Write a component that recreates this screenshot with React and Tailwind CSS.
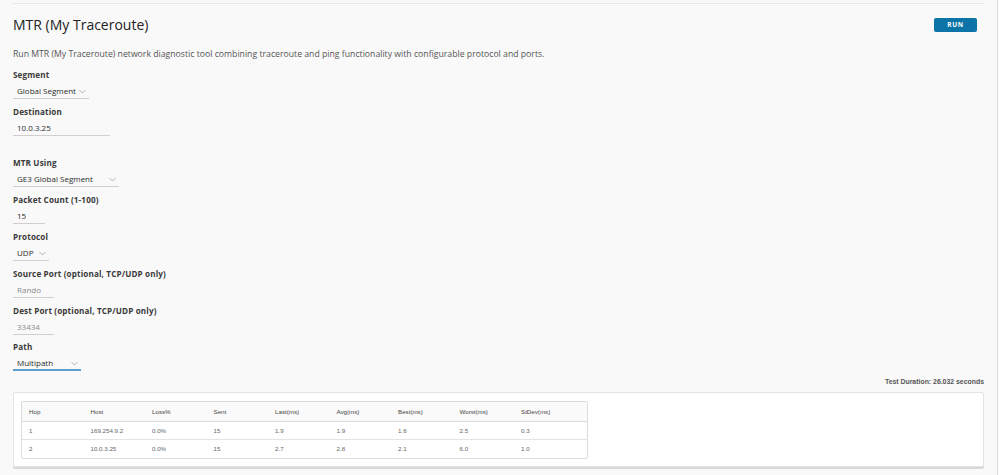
import React from 'react';

const hops = [
  { hop: 1, host: '169.254.9.2', loss: '0.0%', sent: 15, last: '1.9', avg: '1.9', best: '1.6', worst: '2.5', stdev: '0.3' },
  { hop: 2, host: '10.0.3.25', loss: '0.0%', sent: 15, last: '2.7', avg: '2.8', best: '2.1', worst: '6.0', stdev: '1.0' },
];

const columns = ['Hop', 'Host', 'Loss%', 'Sent', 'Last(ms)', 'Avg(ms)', 'Best(ms)', 'Worst(ms)', 'StDev(ms)'];

function Chevron() {
  return (
    <svg width="7" height="5" viewBox="0 0 7 5" className="shrink-0">
      <path d="M0.5 1 L3.5 4 L6.5 1" fill="none" stroke="#a0a0a0" strokeWidth="0.8" />
    </svg>
  );
}

function Field({ label, children, className = '' }) {
  return (
    <div className={className}>
      <div className="h-[12px] leading-[12px] text-[8.1px] font-bold text-[#3a3a3a] tracking-[0.15px]">{label}</div>
      {children}
    </div>
  );
}

function Select({ value, width, active }) {
  return (
    <div
      className={`mt-[3px] h-[15px] flex items-center justify-between pl-[4px] pr-[3px] text-[8px] text-[#2a2a2a] whitespace-nowrap ${active ? 'border-b-2 border-[#5a9fd0] pt-[1px]' : 'border-b border-[#cfcfcf]'}`}
      style={{ width }}
    >
      <span>{value}</span>
      <Chevron />
    </div>
  );
}

// narrow number inputs keep room on the right, so long placeholders get cut
function Input({ value, width, placeholder }) {
  return (
    <div
      className={`mt-[3px] h-[15px] flex items-center pl-[4px] whitespace-nowrap text-[8px] border-b border-[#cfcfcf] ${placeholder ? 'text-[#8a8a8a] pr-[13px]' : 'text-[#2a2a2a] pr-[4px]'}`}
      style={{ width }}
    >
      <span className="block min-w-0 overflow-hidden">{value}</span>
    </div>
  );
}

export default function App() {
  return (
    <div className="w-[998px] h-[475px] bg-[#f9f9f9] border-r border-[#dcdcdc] pt-[3px] px-[13px] font-['Open_Sans',sans-serif] overflow-hidden">
      <div className="border-t border-[#e6e6e6]">
        <div className="mt-[10px] h-[22px] flex items-center justify-between">
          <h1 className="text-[14px] leading-[22px] text-[#222] font-normal">MTR (My Traceroute)</h1>
          <button className="w-[43px] h-[14px] mr-[7px] rounded-[2px] bg-[#0c74a6] text-white text-[6.5px] font-bold tracking-[0.6px]">RUN</button>
        </div>

        <p className="mt-[12px] h-[12px] leading-[12px] text-[8.7px] text-[#555]">
          Run MTR (My Traceroute) network diagnostic tool combining traceroute and ping functionality with configurable protocol and ports.
        </p>

        <div className="mt-[9px] flex flex-col">
          <Field label="Segment">
            <Select value="Global Segment" width="76px" />
          </Field>
          <Field label="Destination" className="mt-[7px]">
            <Input value="10.0.3.25" width="97px" />
          </Field>
          <Field label="MTR Using" className="mt-[21px]">
            <Select value="GE3 Global Segment" width="106px" />
          </Field>
          <Field label="Packet Count (1-100)" className="mt-[7px]">
            <Input value="15" width="32px" />
          </Field>
          <Field label="Protocol" className="mt-[7px]">
            <Select value="UDP" width="36px" />
          </Field>
          <Field label="Source Port (optional, TCP/UDP only)" className="mt-[7px]">
            <Input value="Random" width="41px" placeholder />
          </Field>
          <Field label="Dest Port (optional, TCP/UDP only)" className="mt-[7px]">
            <Input value="33434" width="41px" placeholder />
          </Field>
          <Field label="Path" className="mt-[6px]">
            <Select value="Multipath" width="68px" active />
          </Field>
        </div>

        <div className="mt-[5px] h-[12px] leading-[12px] text-right text-[6.9px] font-bold text-[#555] font-['Liberation_Sans',sans-serif]">
          Test Duration: 26.032 seconds
        </div>

        <div className="mt-[4px] bg-white border border-[#e4e4e4] rounded-[2px] shadow-[0_2px_0_#d8d8d8] px-[7px] pt-[8px] pb-[7px]">
          <table className="w-[567px] border border-[#dcdcdc] rounded-[2px] border-separate border-spacing-0 font-['Liberation_Sans',sans-serif] text-[6.2px] text-[#666]">
            <thead>
              <tr className="bg-[#fafafa] h-[20px]">
                {columns.map((c, i) => (
                  <th key={c} className={`text-left font-normal text-[#444] pl-[7px] border-b border-[#dcdcdc] ${i === 8 ? '' : 'w-[61.5px]'}`}>{c}</th>
                ))}
              </tr>
            </thead>
            <tbody>
              {hops.map((h, r) => {
                const cells = [h.hop, h.host, h.loss, h.sent, h.last, h.avg, h.best, h.worst, h.stdev];
                return (
                  <tr key={h.hop} className="h-[18px]">
                    {cells.map((v, i) => (
                      <td key={i} className={`pl-[7px] ${r === 0 ? 'border-b border-[#e4e4e4]' : ''}`}>{v}</td>
                    ))}
                  </tr>
                );
              })}
            </tbody>
          </table>
        </div>
      </div>
    </div>
  );
}
